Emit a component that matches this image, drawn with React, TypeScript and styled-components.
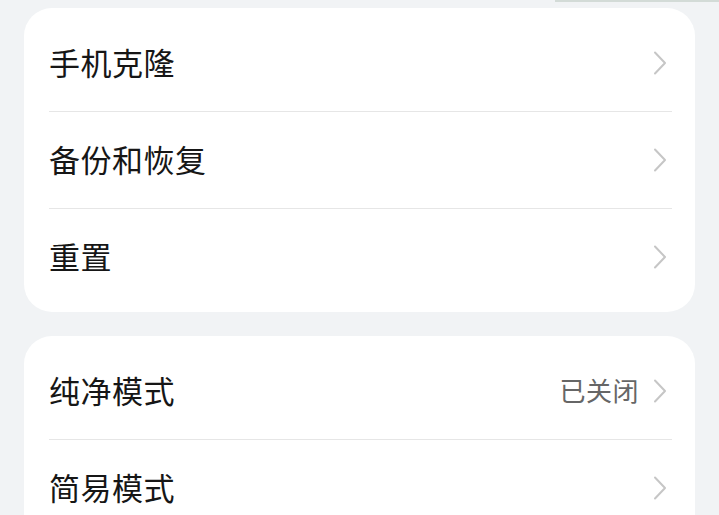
import React from "react";
import styled, { createGlobalStyle } from "styled-components";

const Global = createGlobalStyle`
  html, body { margin: 0; padding: 0; background: #f1f3f5; }
  body { font-family: "Noto Sans CJK SC", "Noto Sans", sans-serif; }
`;

const Page = styled.div`
  width: 719px;
  height: 515px;
  overflow: hidden;
  background: #f1f3f5;
  display: flex;
  flex-direction: column;
`;

const TopStrip = styled.div`
  height: 2px;
  display: flex;
  justify-content: flex-end;
  margin-bottom: 6px;
`;

const TopMark = styled.div`
  width: 164px;
  height: 2px;
  background: #d3dbd7;
`;

const Card = styled.div`
  margin: 0 24px 24px 24px;
  background: #ffffff;
  border-radius: 28px;
  padding: 7px 0;
  display: flex;
  flex-direction: column;
  flex-shrink: 0;
`;

const Row = styled.div`
  height: 96px;
  padding: 0 28px 0 25px;
  display: flex;
  align-items: center;
`;

const Label = styled.div`
  flex: 1;
  font-size: 31px;
  font-weight: 400;
  color: #161616;
  letter-spacing: 0.5px;
  line-height: 1;
  margin-bottom: 4px;
`;

const Value = styled.div`
  font-size: 26px;
  color: #666666;
  margin-right: 14px;
  letter-spacing: 0.5px;
  line-height: 1;
  margin-bottom: 2px;
`;

const Divider = styled.div`
  height: 1px;
  margin: 0 23px 0 25px;
  background: #e6e6e6;
`;

const Chevron = () => (
  <svg width="14" height="24" viewBox="0 0 14 24" fill="none">
    <path d="M2 1.5 L12 12 L2 22.5" stroke="#c6c6c6" strokeWidth="2" strokeLinecap="round" strokeLinejoin="round" />
  </svg>
);

type Item = { label: string; value?: string };

const groups: Item[][] = [
  [{ label: "手机克隆" }, { label: "备份和恢复" }, { label: "重置" }],
  [{ label: "纯净模式", value: "已关闭" }, { label: "简易模式" }],
];

export default function App() {
  return (
    <Page>
      <Global />
      <TopStrip>
        <TopMark />
      </TopStrip>
      {groups.map((g, gi) => (
        <Card key={gi}>
          {g.map((it, i) => (
            <React.Fragment key={it.label}>
              {i > 0 && <Divider />}
              <Row>
                <Label>{it.label}</Label>
                {it.value && <Value>{it.value}</Value>}
                <Chevron />
              </Row>
            </React.Fragment>
          ))}
        </Card>
      ))}
    </Page>
  );
}
